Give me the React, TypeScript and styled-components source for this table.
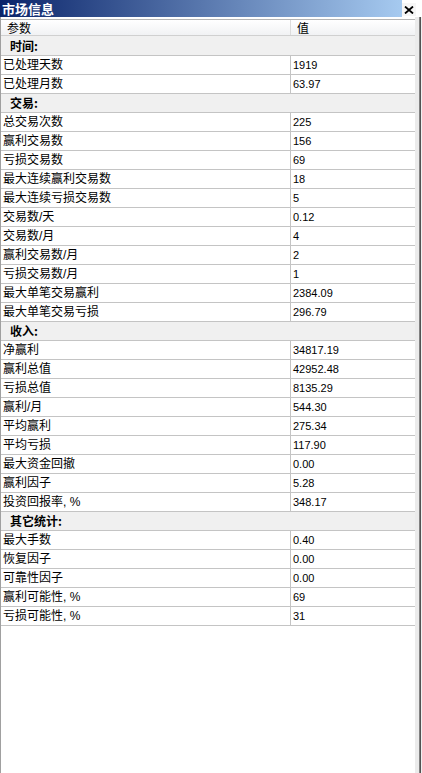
import styled, { createGlobalStyle } from 'styled-components';

const GlobalStyle = createGlobalStyle`
  html, body {
    margin: 0;
    padding: 0;
    background: #fff;
  }
  body {
    font-family: 'Liberation Sans', 'Noto Sans CJK SC', sans-serif;
  }
`;

const Window = styled.div`
  width: 422px;
  height: 773px;
  display: flex;
  flex-direction: column;
  background: #fff;
  overflow: hidden;
`;

const TitleBar = styled.div`
  display: flex;
  height: 17px;
`;

const Title = styled.div`
  flex: 1;
  height: 17px;
  padding-left: 2px;
  background: linear-gradient(to right, #0a246a, #a6caf0);
  color: #fff;
  font-family: 'Noto Sans CJK SC', sans-serif;
  font-weight: bold;
  font-size: 13px;
  line-height: 17px;
  white-space: nowrap;
`;

const CloseButton = styled.div`
  width: 14px;
  height: 13px;
  margin: 3px 6px 0 0;
  background: #f6f6f6;
  display: flex;
  align-items: center;
  justify-content: center;
`;

const Body = styled.div`
  flex: 1;
  display: flex;
`;

const Grid = styled.div`
  width: 414px;
  border-left: 1px solid #a0a0a0;
  padding-top: 2px;
`;

const EdgeLight = styled.div`
  width: 4px;
  background: #ebebeb;
`;

const EdgeDark = styled.div`
  width: 2px;
  background: linear-gradient(to right, #9a9a9a, #3a3a3a);
`;

const EdgeOuter = styled.div`
  flex: 1;
  background: #f0f0f0;
`;

const HeaderRow = styled.div`
  display: grid;
  grid-template-columns: 289px 1fr;
  height: 15px;
  border-top: 1px solid #b4b4b4;
  border-bottom: 1px solid #d0d0d0;
  background: linear-gradient(#ffffff, #f1f2f4);
  font-family: 'Noto Sans CJK SC', sans-serif;
  font-size: 12px;
  line-height: 15px;
  color: #000;
`;

const HeaderCell = styled.div<{ $divided?: boolean }>`
  padding-left: 6px;
  border-left: ${({ $divided }) => ($divided ? '1px solid #dcdcdc' : 'none')};
  overflow: hidden;
`;

const SectionRow = styled.div<{ $first?: boolean }>`
  height: ${({ $first }) => ($first ? '19px' : '18px')};
  border-bottom: 1px solid #c4c4c4;
  background: #f0f0f0;
  padding-left: 9px;
  font-family: 'Noto Sans CJK SC', sans-serif;
  font-weight: bold;
  font-size: 12px;
  line-height: ${({ $first }) => ($first ? '19px' : '18px')};
  color: #000;
`;

const DataRow = styled.div`
  display: grid;
  grid-template-columns: 289px 1fr;
  height: 18px;
  border-bottom: 1px solid #c4c4c4;
`;

const Label = styled.div`
  padding-left: 2px;
  font-size: 12px;
  line-height: 18px;
  color: #000;
  white-space: nowrap;
  overflow: hidden;
`;

const Value = styled.div`
  padding-left: 2px;
  border-left: 1px solid #c4c4c4;
  font-family: 'Liberation Sans', sans-serif;
  font-size: 11px;
  line-height: 18px;
  color: #000;
`;

type Section = { title: string; rows: [string, string][] };

const sections: Section[] = [
  {
    title: '时间:',
    rows: [
      ['已处理天数', '1919'],
      ['已处理月数', '63.97'],
    ],
  },
  {
    title: '交易:',
    rows: [
      ['总交易次数', '225'],
      ['赢利交易数', '156'],
      ['亏损交易数', '69'],
      ['最大连续赢利交易数', '18'],
      ['最大连续亏损交易数', '5'],
      ['交易数/天', '0.12'],
      ['交易数/月', '4'],
      ['赢利交易数/月', '2'],
      ['亏损交易数/月', '1'],
      ['最大单笔交易赢利', '2384.09'],
      ['最大单笔交易亏损', '296.79'],
    ],
  },
  {
    title: '收入:',
    rows: [
      ['净赢利', '34817.19'],
      ['赢利总值', '42952.48'],
      ['亏损总值', '8135.29'],
      ['赢利/月', '544.30'],
      ['平均赢利', '275.34'],
      ['平均亏损', '117.90'],
      ['最大资金回撤', '0.00'],
      ['赢利因子', '5.28'],
      ['投资回报率, %', '348.17'],
    ],
  },
  {
    title: '其它统计:',
    rows: [
      ['最大手数', '0.40'],
      ['恢复因子', '0.00'],
      ['可靠性因子', '0.00'],
      ['赢利可能性, %', '69'],
      ['亏损可能性, %', '31'],
    ],
  },
];

const CloseIcon = () => (
  <svg width="10" height="8" viewBox="0 0 10 8">
    <path d="M1 0.5 L9 7.5 M9 0.5 L1 7.5" stroke="#000" strokeWidth="1.8" />
  </svg>
);

const App = () => {
  return (
    <>
      <GlobalStyle />
      <Window>
        <TitleBar>
          <Title>市场信息</Title>
          <CloseButton>
            <CloseIcon />
          </CloseButton>
        </TitleBar>
        <Body>
          <Grid>
            <HeaderRow>
              <HeaderCell>参数</HeaderCell>
              <HeaderCell $divided>值</HeaderCell>
            </HeaderRow>
            {sections.map((section, idx) => (
              <div key={section.title}>
                <SectionRow $first={idx === 0}>{section.title}</SectionRow>
                {section.rows.map(([label, value]) => (
                  <DataRow key={label}>
                    <Label>{label}</Label>
                    <Value>{value}</Value>
                  </DataRow>
                ))}
              </div>
            ))}
          </Grid>
          <EdgeLight />
          <EdgeDark />
          <EdgeOuter />
        </Body>
      </Window>
    </>
  );
};

export default App;
